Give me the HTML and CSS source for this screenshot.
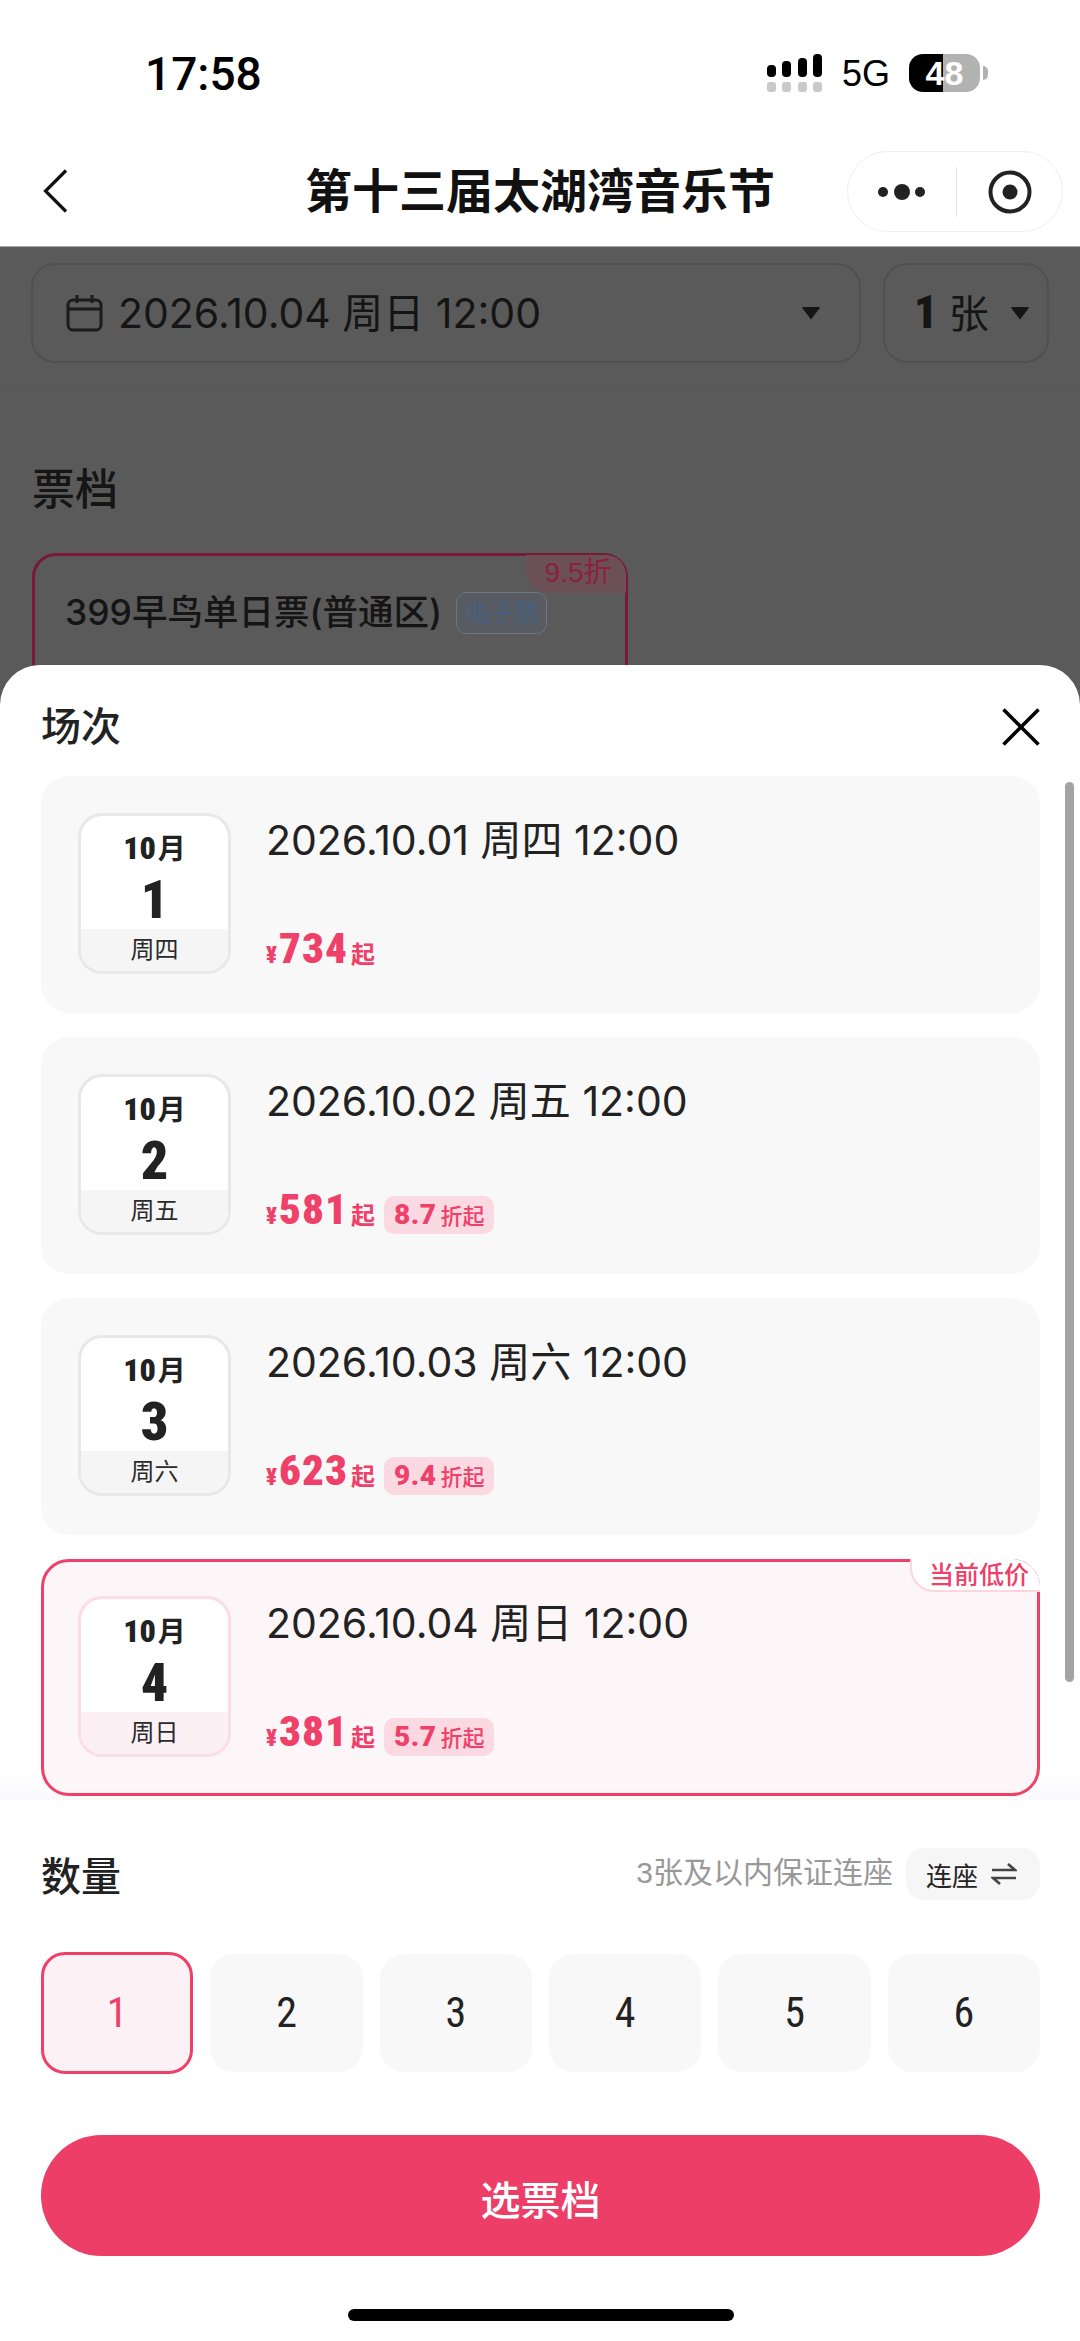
FILE: index.html
```html
<!DOCTYPE html>
<html lang="zh-CN">
  <head>
    <meta charset="UTF-8" />
    <meta name="viewport" content="width=device-width, initial-scale=1.0" />
    <title>第十三届太湖湾音乐节</title>
    <link rel="stylesheet" href="styles.css">
  </head>
  <body>
    <div class="screen">
      <!-- Status bar -->
      <div class="status-bar">
        <span class="clock">17:58</span>
        <div class="status-right">
          <svg class="signal" width="56" height="38" viewBox="0 0 56 38">
            <g fill="#000">
              <rect x="0" y="11" width="9" height="12" rx="4"/>
              <rect x="15" y="7" width="9" height="16" rx="4"/>
              <rect x="31" y="4" width="9" height="19" rx="4"/>
              <rect x="46" y="0" width="9" height="23" rx="4"/>
            </g>
            <g fill="#c9c9c9">
              <rect x="0" y="28" width="9" height="10" rx="3"/>
              <rect x="15" y="28" width="9" height="10" rx="3"/>
              <rect x="31" y="28" width="9" height="10" rx="3"/>
              <rect x="46" y="28" width="9" height="10" rx="3"/>
            </g>
          </svg>
          <span class="network">5G</span>
          <div class="battery"><span class="battery-level">48</span></div>
          <span class="battery-nub"></span>
        </div>
      </div>

      <!-- Nav -->
      <header class="nav">
        <svg class="back" width="26" height="44" viewBox="0 0 26 44">
          <path d="M23 1.5 L2.5 22 L23 42.5" fill="none" stroke="#111" stroke-width="3.2"/>
        </svg>
        <h1>第十三届太湖湾音乐节</h1>
        <div class="capsule">
          <svg width="56" height="20" viewBox="0 0 56 20">
            <circle cx="8" cy="10" r="5" fill="#222"/>
            <circle cx="27" cy="10" r="8" fill="#222"/>
            <circle cx="45" cy="10" r="5" fill="#222"/>
          </svg>
          <span class="capsule-line"></span>
          <svg width="46" height="46" viewBox="0 0 46 46">
            <circle cx="23" cy="23" r="19.5" fill="none" stroke="#222" stroke-width="4"/>
            <circle cx="23" cy="23" r="7.5" fill="#222"/>
          </svg>
        </div>
      </header>

      <!-- Page behind the sheet -->
      <main class="behind">
        <div class="selects">
          <div class="select select-date">
            <svg width="38" height="38" viewBox="0 0 38 38">
              <g fill="none" stroke="#1b1b1b" stroke-width="3">
                <rect x="2" y="6" width="33" height="30" rx="5"/>
                <path d="M2 15 H35 M11 1 V9 M26 1 V9"/>
              </g>
            </svg>
            <span class="select-text">2026.10.04 周日 12:00</span>
            <span class="caret"></span>
          </div>
          <div class="select select-count">
            <span class="select-count-text"><b>1</b> 张</span>
            <span class="caret"></span>
          </div>
        </div>
        <hr class="behind-line" />
        <h2>票档</h2>
        <div class="ticket">
          <span class="ticket-off">9.5折</span>
          <span class="ticket-name">399早鸟单日票(普通区)</span>
          <span class="ticket-tag">电子票</span>
        </div>
      </main>

      <!-- Bottom sheet -->
      <section class="sheet">
        <div class="sheet-head">
          <h3>场次</h3>
          <svg width="38" height="38" viewBox="0 0 38 38">
            <path d="M1.5 1.5 L36.5 36.5 M36.5 1.5 L1.5 36.5" fill="none" stroke="#000" stroke-width="3.6"/>
          </svg>
        </div>

        <div class="list">
          <div class="card">
            <div class="tile">
              <div class="tile-top">
                <div class="tile-month"><b>10</b>月</div>
                <div class="tile-day">1</div>
              </div>
              <div class="tile-week">周四</div>
            </div>
            <div class="info">
              <div class="when">2026.10.01 周四 12:00</div>
              <div class="price">
                <span class="yen">¥</span><span class="amount">734</span><span class="from">起</span>
              </div>
            </div>
          </div>

          <div class="card">
            <div class="tile">
              <div class="tile-top">
                <div class="tile-month"><b>10</b>月</div>
                <div class="tile-day">2</div>
              </div>
              <div class="tile-week">周五</div>
            </div>
            <div class="info">
              <div class="when">2026.10.02 周五 12:00</div>
              <div class="price">
                <span class="yen">¥</span><span class="amount">581</span><span class="from">起</span>
                <span class="off"><b>8.7</b>折起</span>
              </div>
            </div>
          </div>

          <div class="card">
            <div class="tile">
              <div class="tile-top">
                <div class="tile-month"><b>10</b>月</div>
                <div class="tile-day">3</div>
              </div>
              <div class="tile-week">周六</div>
            </div>
            <div class="info">
              <div class="when">2026.10.03 周六 12:00</div>
              <div class="price">
                <span class="yen">¥</span><span class="amount">623</span><span class="from">起</span>
                <span class="off"><b>9.4</b>折起</span>
              </div>
            </div>
          </div>

          <div class="card card-active">
            <span class="low-badge">当前低价</span>
            <div class="tile">
              <div class="tile-top">
                <div class="tile-month"><b>10</b>月</div>
                <div class="tile-day">4</div>
              </div>
              <div class="tile-week">周日</div>
            </div>
            <div class="info">
              <div class="when">2026.10.04 周日 12:00</div>
              <div class="price">
                <span class="yen">¥</span><span class="amount">381</span><span class="from">起</span>
                <span class="off"><b>5.7</b>折起</span>
              </div>
            </div>
          </div>
        </div>
        <span class="scroll-thumb"></span>

        <div class="qty-head">
          <h3>数量</h3>
          <div class="qty-note">
            <span class="qty-note-text">3张及以内保证连座</span>
            <div class="seat-pill">
              连座
              <svg width="26" height="22" viewBox="0 0 26 22">
                <path d="M1 7 H24 L17 1 M25 15 H2 L9 21" fill="none" stroke="#444" stroke-width="2.6"/>
              </svg>
            </div>
          </div>
        </div>

        <div class="qty-grid">
          <div class="qty qty-active">1</div>
          <div class="qty">2</div>
          <div class="qty">3</div>
          <div class="qty">4</div>
          <div class="qty">5</div>
          <div class="qty">6</div>
        </div>

        <button class="submit">选票档</button>
        <div class="home-bar"></div>
      </section>
    </div>
  </body>
</html>
```

FILE: styles.css
```css
/* General Reset */
* {
  margin: 0;
  padding: 0;
  box-sizing: border-box;
  font-family: "Liberation Sans", "Noto Sans CJK SC", sans-serif;
}

body {
  background-color: #fff;
}

.screen {
  position: relative;
  width: 1080px;
  height: 2341px;
  overflow: hidden;
  display: flex;
  flex-direction: column;
}

/* Status bar */
.status-bar {
  height: 150px;
  display: flex;
  justify-content: space-between;
  padding: 48px 92px 0 145px;
}

.clock {
  font-family: Roboto, sans-serif;
  font-weight: 500;
  font-size: 46px;
  line-height: 52px;
  color: #000;
}

.status-right {
  display: flex;
  align-items: flex-start;
  padding-top: 6px;
}

.network {
  margin-left: 19px;
  font-size: 36px;
  line-height: 40px;
  color: #000;
}

.battery {
  width: 71px;
  height: 38px;
  margin-left: 19px;
  border-radius: 14px;
  background: linear-gradient(to right, #000 34px, #b2b2b2 34px);
  text-align: center;
}

.battery-level {
  font-size: 34px;
  font-weight: bold;
  line-height: 38px;
  color: #fff;
}

.battery-nub {
  width: 5px;
  height: 14px;
  margin: 12px 0 0 3px;
  border-radius: 0 5px 5px 0;
  background-color: #b2b2b2;
}

/* Nav */
.nav {
  position: relative;
  height: 97px;
  display: flex;
  align-items: flex-start;
  border-bottom: 1px solid #a9a9a9;
}

.back {
  position: absolute;
  left: 43px;
  top: 19px;
}

.nav h1 {
  width: 100%;
  font-size: 47px;
  font-weight: bold;
  line-height: 84px;
  text-align: center;
  color: #111;
}

.capsule {
  position: absolute;
  left: 847px;
  top: 1px;
  width: 216px;
  height: 81px;
  display: flex;
  align-items: center;
  padding-left: 27px;
  border: 1px solid #efefef;
  border-radius: 41px;
  background-color: #fff;
}

.capsule-line {
  width: 1px;
  height: 50px;
  margin: 0 30px 0 25px;
  background-color: #e4e4e4;
}

/* Page behind the sheet */
.behind {
  flex-grow: 1;
  padding: 16px 31px 0;
  background-color: #5a5a5a;
}

.selects {
  display: flex;
  gap: 22px;
}

.select {
  height: 100px;
  display: flex;
  align-items: center;
  border: 2px solid #505050;
  border-radius: 24px;
}

.select-date {
  width: 830px;
  padding: 0 38px 0 33px;
}

.select-count {
  width: 166px;
  padding: 0 17px 0 29px;
}

.select-text {
  flex-grow: 1;
  margin: -6px 0 0 14px;
  font-family: Inter, "Noto Sans CJK SC", sans-serif;
  font-size: 41px;
  color: #151515;
}

.select-count-text {
  flex-grow: 1;
  margin-top: -4px;
  font-size: 40px;
  color: #151515;
}

.select-count-text b {
  font-family: Roboto, sans-serif;
  font-stretch: 75%;
  font-weight: 900;
  font-size: 46px;
}

.caret {
  width: 20px;
  height: 13px;
  border-radius: 3px;
  background-color: #151515;
  clip-path: polygon(0 0, 100% 0, 50% 100%);
}

.behind-line {
  height: 0;
  margin: 22px -31px 0;
  border: none;
  border-top: 1px solid #555;
}

.behind h2 {
  margin: 74px 0 0 1px;
  font-size: 43px;
  font-weight: 500;
  line-height: 60px;
  color: #151515;
}

.ticket {
  position: relative;
  width: 596px;
  height: 200px;
  margin: 33px 0 0 1px;
  padding: 32px 0 0 30px;
  display: flex;
  align-items: flex-start;
  border: 3px solid #78193a;
  border-radius: 24px;
}

.ticket-off {
  position: absolute;
  right: -1px;
  top: -1px;
  width: 100px;
  height: 38px;
  padding-left: 4px;
  border-radius: 0 20px 0 24px;
  background-color: #6b5058;
  font-size: 28px;
  line-height: 36px;
  text-align: center;
  color: #8c2040;
}

.ticket-name {
  font-family: Inter, "Noto Sans CJK SC", sans-serif;
  font-size: 35.5px;
  font-weight: 500;
  line-height: 50px;
  color: #151515;
}

.ticket-tag {
  margin: 4px 0 0 14px;
  padding: 0 7px;
  border: 1px solid #6b7680;
  border-radius: 10px;
  background-color: #585c62;
  font-size: 25px;
  line-height: 40px;
  color: #46607f;
}

/* Bottom sheet */
.sheet {
  position: absolute;
  left: 0;
  right: 0;
  top: 665px;
  bottom: 0;
  padding: 0 40px 0 41px;
  border-radius: 40px 40px 0 0;
  background-color: #fff;
}

.sheet-head {
  height: 111px;
  padding-top: 43px;
  display: flex;
  justify-content: space-between;
  align-items: flex-start;
}

.sheet h3 {
  font-size: 40px;
  font-weight: 500;
  line-height: 38px;
  color: #222;
}

.list {
  height: 1024px;
  margin: 0 -40px 0 -41px;
  padding: 0 40px 0 41px;
  display: flex;
  flex-direction: column;
  gap: 24px;
  overflow: hidden;
  background: linear-gradient(to bottom, #fff 997px, #f9f9fc 100%);
}

.card {
  position: relative;
  flex-shrink: 0;
  height: 237px;
  display: flex;
  gap: 35px;
  padding: 34px;
  border: 3px solid transparent;
  border-radius: 28px;
  background-color: #f8f8f8;
}

.card-active {
  border-color: #ee4069;
  background-color: #fcf6f9;
}

.tile {
  width: 153px;
  height: 161px;
  display: flex;
  flex-direction: column;
  border: 3px solid #e8e8e8;
  border-radius: 24px;
  overflow: hidden;
  background-color: #fff;
}

.card-active .tile {
  border-color: #fadde5;
}

.tile-top {
  height: 113px;
  padding-top: 15px;
  text-align: center;
}

.tile-month {
  font-size: 28px;
  font-weight: bold;
  line-height: 34px;
  color: #222;
}

.tile-month b,
.tile-day,
.amount {
  font-family: Roboto, sans-serif;
  font-stretch: 75%;
  font-weight: 900;
}

.tile-month b {
  font-size: 32px;
  margin-right: 2px;
}

.tile-day {
  padding-top: 3px;
  font-size: 54px;
  line-height: 60px;
  color: #222;
}

.tile-week {
  flex-grow: 1;
  padding-top: 1px;
  background-color: #f5f5f5;
  font-size: 24px;
  line-height: 40px;
  text-align: center;
  color: #2a2a2a;
}

.card-active .tile-week {
  background-color: #fcf0f4;
}

.info {
  display: flex;
  flex-direction: column;
  justify-content: space-between;
  height: 160px;
}

.when {
  padding-top: 3px;
  font-family: Inter, "Noto Sans CJK SC", sans-serif;
  font-size: 41px;
  line-height: 48px;
  color: #222;
}

.price {
  display: flex;
  align-items: baseline;
  color: #ee4069;
  height: 47px;
  line-height: 44px;
}

.yen {
  font-family: Roboto, sans-serif;
  font-stretch: 75%;
  font-size: 23px;
  font-weight: 900;
  margin-right: 2px;
}

.amount {
  font-size: 43px;
  letter-spacing: 1px;
}

.from {
  margin-left: 3px;
  font-size: 24px;
  font-weight: bold;
}

.off {
  height: 38px;
  margin-left: 9px;
  padding: 0 10px;
  border-radius: 10px;
  background-color: #fbd9e2;
  font-size: 22px;
  font-weight: 500;
  line-height: 37px;
}

.off b {
  font-family: Roboto, sans-serif;
  font-size: 28px;
  font-weight: 900;
  letter-spacing: 0.5px;
  margin-right: 4px;
}

.low-badge {
  position: absolute;
  right: -3px;
  top: -3px;
  width: 130px;
  height: 33px;
  padding: 3px 0 0 17px;
  border-left: 2px solid #fcd5df;
  border-bottom: 2px solid #fcd5df;
  border-radius: 0 28px 0 24px;
  background-color: #fff;
  font-size: 25px;
  font-weight: 500;
  line-height: 26px;
  color: #ee4069;
}

.scroll-thumb {
  position: absolute;
  left: 1065px;
  top: 117px;
  width: 9px;
  height: 900px;
  border-radius: 5px;
  background-color: #a3a3a3;
}

/* Quantity */
.qty-head {
  height: 152px;
  padding-top: 48px;
  display: flex;
  justify-content: space-between;
  align-items: flex-start;
}

.qty-head h3 {
  padding-top: 10px;
}

.qty-note {
  display: flex;
  align-items: center;
  gap: 13px;
  font-size: 30px;
  color: #999;
}

.qty-note-text {
  margin-top: -8px;
}

.seat-pill {
  width: 134px;
  height: 52px;
  display: flex;
  align-items: center;
  gap: 13px;
  padding-left: 20px;
  border-radius: 18px;
  background-color: #f6f6f6;
  font-size: 26px;
  color: #222;
}

.qty-grid {
  display: grid;
  grid-template-columns: repeat(6, 1fr);
  gap: 17px;
  height: 122px;
  align-items: center;
}

.qty {
  height: 118px;
  border-radius: 24px;
  background-color: #f8f8f8;
  font-family: Roboto, sans-serif;
  font-stretch: 85%;
  font-size: 42px;
  line-height: 118px;
  text-align: center;
  color: #222;
}

.qty-active {
  height: 122px;
  border: 3px solid #ee4069;
  background-color: #fcf2f6;
  line-height: 116px;
  color: #ee4069;
}

.submit {
  display: block;
  width: 100%;
  height: 121px;
  margin-top: 61px;
  padding-top: 5px;
  border: none;
  border-radius: 61px;
  background-color: #ec3e67;
  font-size: 40px;
  font-weight: 500;
  color: #fff;
}

.home-bar {
  width: 386px;
  height: 12px;
  margin: 53px auto 0;
  border-radius: 6px;
  background-color: #000;
}
```
